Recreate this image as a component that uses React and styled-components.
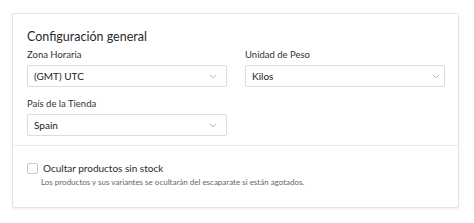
import React from 'react';
import styled, { createGlobalStyle } from 'styled-components';

const GlobalStyle = createGlobalStyle`
  body {
    margin: 0;
    background: #ffffff;
    font-family: Lato, "Liberation Sans", sans-serif;
    color: #2b2b2b;
  }
`;

const Page = styled.div`
  padding: 13px 15px 15px 12px;
`;

const Card = styled.section`
  width: 447px;
  box-sizing: border-box;
  background: #fff;
  border: 1px solid #e4e4e4;
  box-shadow: 0 1px 2px rgba(0, 0, 0, 0.08);
  border-radius: 2px;
`;

const Top = styled.div`
  padding: 14px 13px 9px 14px;
`;

const Title = styled.h2`
  margin: 0 0 4px;
  font-size: 12.5px;
  font-weight: 400;
  color: #2a2a2a;
  line-height: 17px;
`;

const Grid = styled.div`
  display: grid;
  grid-template-columns: 200px 200px;
  column-gap: 18px;
  row-gap: 11px;
`;

const Field = styled.div`
  display: flex;
  flex-direction: column;
`;

const Label = styled.label`
  font-size: 9.5px;
  color: #333;
  line-height: 12px;
  margin-bottom: 4px;
`;

const Select = styled.div`
  height: 22px;
  box-sizing: border-box;
  border: 1px solid #dcdcdc;
  border-radius: 2px;
  display: flex;
  align-items: center;
  justify-content: space-between;
  padding: 0 ${p => (p.$tight ? '4px' : '9px')} 0 6px;
  font-size: 10px;
  color: #222;
`;

const Chevron = () => (
  <svg width="8" height="5" viewBox="0 0 8 5">
    <path d="M0.8 0.8 L4 3.8 L7.2 0.8" fill="none" stroke="#b8b8b8" strokeWidth="1" />
  </svg>
);

const Divider = styled.hr`
  margin: 0;
  border: 0;
  border-top: 1px solid #ececec;
`;

const Bottom = styled.div`
  padding: 16px 14px 19px 14px;
`;

const CheckRow = styled.div`
  display: flex;
  align-items: center;
  gap: 5px;
`;

const Box = styled.span`
  width: 9px;
  height: 9px;
  border: 1px solid #c9c9c9;
  border-radius: 2px;
  background: #fff;
`;

const CheckText = styled.span`
  font-size: 10px;
  color: #2b2b2b;
  line-height: 12px;
`;

const Hint = styled.p`
  margin: 3px 0 0 14px;
  font-size: 8px;
  color: #666;
  line-height: 11px;
`;

export default function App() {
  return (
    <Page>
      <GlobalStyle />
      <Card>
        <Top>
          <Title>Configuración general</Title>
          <Grid>
            <Field>
              <Label>Zona Horaria</Label>
              <Select>
                (GMT) UTC
                <Chevron />
              </Select>
            </Field>
            <Field>
              <Label>Unidad de Peso</Label>
              <Select $tight>
                Kilos
                <Chevron />
              </Select>
            </Field>
            <Field>
              <Label>País de la Tienda</Label>
              <Select>
                Spain
                <Chevron />
              </Select>
            </Field>
          </Grid>
        </Top>
        <Divider />
        <Bottom>
          <CheckRow>
            <Box />
            <CheckText>Ocultar productos sin stock</CheckText>
          </CheckRow>
          <Hint>Los productos y sus variantes se ocultarán del escaparate si están agotados.</Hint>
        </Bottom>
      </Card>
    </Page>
  );
}
